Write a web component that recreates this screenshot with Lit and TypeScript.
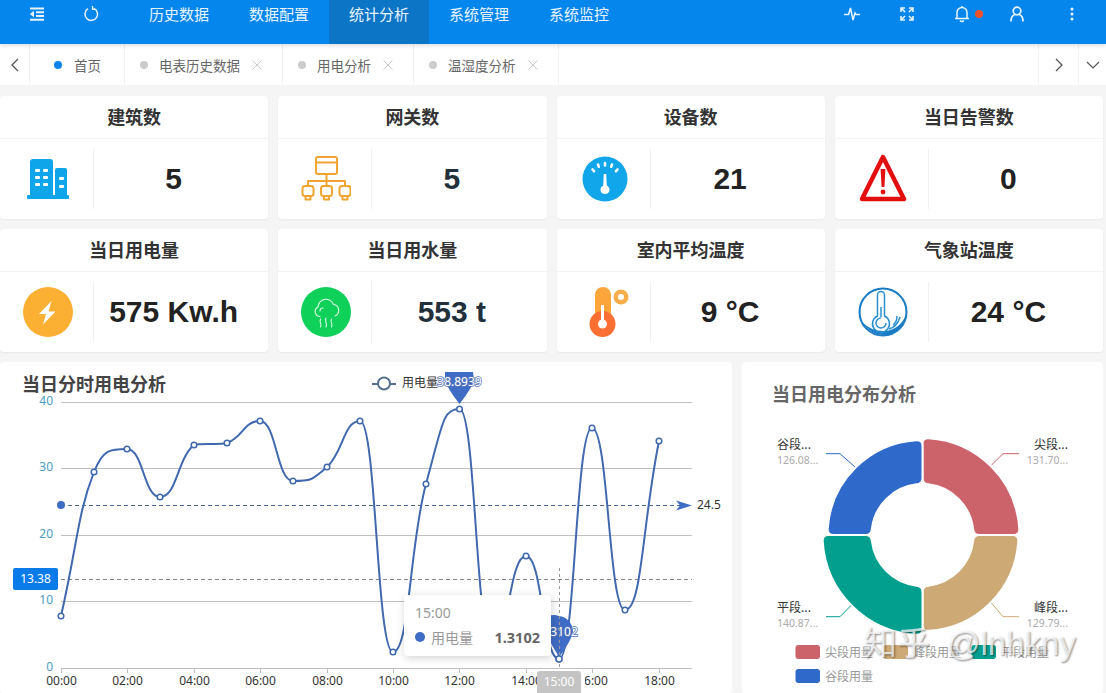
import { LitElement, html, css, svg } from "lit";
import { customElement } from "lit/decorators.js";

const PTS: [number, number][] = [
  [61, 616], [94, 472], [127, 449], [160, 497], [194, 445], [227, 443], [260, 421],
  [293, 481], [327, 467], [360, 421], [393, 652], [426, 484], [459.5, 409], [492, 644],
  [526, 556], [559, 659], [592, 428], [625, 610], [659, 441],
];

function linePath(p: [number, number][]): string {
  const slope = p.map((pt, i) => {
    if (i === 0) return (p[1][1] - pt[1]) / (p[1][0] - pt[0]);
    if (i === p.length - 1) return (pt[1] - p[i - 1][1]) / (pt[0] - p[i - 1][0]);
    const a = pt[1] - p[i - 1][1];
    const b = p[i + 1][1] - pt[1];
    if (a * b <= 0) return 0;
    return (p[i + 1][1] - p[i - 1][1]) / (p[i + 1][0] - p[i - 1][0]);
  });
  const ctrl = (x: number, y: number, m: number, h: number, limit: number): [number, number] => {
    const dy = m * h;
    if (Math.abs(dy) > Math.abs(limit - y) && m !== 0) {
      const nh = (limit - y) / m;
      return [x + nh, limit];
    }
    return [x + h, y + dy];
  };
  let d = `M${p[0][0]} ${p[0][1]}`;
  for (let i = 0; i < p.length - 1; i++) {
    const [x0, y0] = p[i];
    const [x1, y1] = p[i + 1];
    const h = (x1 - x0) * 0.5;
    const c1 = ctrl(x0, y0, slope[i], h, y1);
    const c2 = ctrl(x1, y1, slope[i + 1], -h, y0);
    d += `C${c1[0]} ${c1[1]} ${c2[0]} ${c2[1]} ${x1} ${y1}`;
  }
  return d;
}

function sector(cx: number, cy: number, r0: number, r1: number, a0: number, a1: number, rad: number): string {
  const P = (r: number, deg: number) => {
    const a = (deg * Math.PI) / 180;
    return `${(cx + r * Math.sin(a)).toFixed(2)} ${(cy - r * Math.cos(a)).toFixed(2)}`;
  };
  const d1 = ((rad / r1) * 180) / Math.PI;
  const d0 = ((rad / r0) * 180) / Math.PI;
  return [
    `M${P(r1, a0 + d1)}`,
    `A${r1} ${r1} 0 0 1 ${P(r1, a1 - d1)}`,
    `Q${P(r1, a1)} ${P(r1 - rad, a1)}`,
    `L${P(r0 + rad, a1)}`,
    `Q${P(r0, a1)} ${P(r0, a1 - d0)}`,
    `A${r0} ${r0} 0 0 0 ${P(r0, a0 + d0)}`,
    `Q${P(r0, a0)} ${P(r0 + rad, a0)}`,
    `L${P(r1 - rad, a0)}`,
    `Q${P(r1, a0)} ${P(r1, a0 + d1)}Z`,
  ].join("");
}

const ICONS = {
  building: svg`
    <rect x="4" y="41" width="42" height="4" rx="1" fill="#0ea5ea"/>
    <path d="M7 42V8a3 3 0 0 1 3-3h17a3 3 0 0 1 3 3v34z" fill="#0ea5ea"/>
    <path d="M32 42V16a2 2 0 0 1 2-2h8a2 2 0 0 1 2 2v26z" fill="#0ea5ea"/>
    <g fill="#fff">
      <rect x="12" y="15" width="5" height="3" rx="1"/><rect x="20" y="15" width="5" height="3" rx="1"/>
      <rect x="12" y="22" width="5" height="3" rx="1"/><rect x="20" y="22" width="5" height="3" rx="1"/>
      <rect x="12" y="29" width="5" height="3" rx="1"/><rect x="20" y="29" width="5" height="3" rx="1"/>
      <rect x="36" y="23" width="5" height="3" rx="1"/><rect x="36" y="31" width="5" height="3" rx="1"/>
    </g>`,
  network: svg`
    <g fill="none" stroke="#f0a530" stroke-width="2" stroke-linejoin="round">
      <rect x="15" y="3" width="21" height="17" rx="2"/><path d="M15 8.500h21"/>
      <path d="M25.500 20v7M7 32v-5h37v5M25.500 27v5"/>
      <rect x="1.500" y="32" width="11" height="10" rx="2.500"/>
      <rect x="20" y="32" width="11" height="10" rx="2.500"/>
      <rect x="38.500" y="32" width="11" height="10" rx="2.500"/>
      <path d="M4.500 42v3.500h5V42M23 42v3.500h5V42M41.500 42v3.500h5V42"/>
    </g>`,
  gauge: svg`
    <circle cx="25" cy="25" r="22.500" fill="#11a5ea"/>
    <g stroke="#fff" stroke-width="2.600" stroke-linecap="round">
      <path d="M12.500 15.500l1.500 1.700M18 10.500l.8 2.200M25 9v2.500M32 10.500l-.8 2.200M37.500 15.500l-1.500 1.700"/>
    </g>
    <path d="M23.800 20h2.400l.6 11.500a4.500 4.500 0 1 1-3.600 0z" fill="#fff"/>`,
  warn: svg`
    <path d="M25 3L46 45H4Z" fill="#fff" stroke="#e30f0f" stroke-width="4.500" stroke-linejoin="round"/>
    <path d="M22.600 15h4.800l-1 18h-2.800z" fill="#e30f0f"/>
    <circle cx="25" cy="38" r="2.400" fill="#e30f0f"/>`,
  bolt: svg`
    <circle cx="25" cy="25" r="25" fill="#fbb034"/>
    <path d="M28.500 14L16 27h7l-3 10.500L32.500 24.500H25.500z" fill="#fff"/>`,
  cloud: svg`
    <circle cx="25" cy="25" r="25" fill="#0fd058"/>
    <g fill="none" stroke="#fff" stroke-opacity=".85" stroke-width="1.100" stroke-linecap="round">
      <path d="M19 29.500a5 5 0 0 1-2-9.500a8 8 0 0 1 15.500-2.500a6 6 0 0 1 1.500 11.500"/>
      <path d="M19 24a3 3 0 0 1 3-3"/>
      <path d="M19.500 32q-1 2.500 0 4t0 4M25 31q-1 2.500 0 4.500t0 4.500M30.500 32q-1 2.500 0 4t0 4"/>
    </g>`,
  thermoOrange: svg`
    <path d="M15 8a8 8 0 0 1 16 0v24H15z" fill="#fca53a"/>
    <circle cx="22.500" cy="37" r="13" fill="#fb6f33"/>
    <rect x="21" y="18" width="3" height="17" fill="#fff"/>
    <circle cx="22.500" cy="37" r="4.500" fill="#fff"/>
    <circle cx="41" cy="10" r="7.500" fill="#f9ae4c"/>
    <circle cx="41" cy="10" r="3" fill="#fff"/>`,
  thermoBlue: svg`
    <circle cx="25" cy="25" r="23.500" fill="#fff" stroke="#1a7cc4" stroke-width="2"/>
    <path d="M4 35Q14 50 30 48Q44 45 48 28Q42 42 28 44Q14 45 4 35Z" fill="#1a7cc4"/>
    <g fill="none" stroke="#2b90d0" stroke-width="1.500">
      <path d="M19.500 29V8a3.500 3.500 0 0 1 7 0v21a8.500 8.500 0 1 1-7 0z"/>
      <path d="M23 20v10M28 36a5 5 0 1 1-5-5"/>
      <path d="M35 38q4-3 4-9M31 42q8-2 11-12"/>
    </g>`,
};

const CARDS = [
  { title: "建筑数", value: "5", icon: ICONS.building, alt: false },
  { title: "网关数", value: "5", icon: ICONS.network, alt: true },
  { title: "设备数", value: "21", icon: ICONS.gauge, alt: false },
  { title: "当日告警数", value: "0", icon: ICONS.warn, alt: false },
  { title: "当日用电量", value: "575 Kw.h", icon: ICONS.bolt, alt: false },
  { title: "当日用水量", value: "553 t", icon: ICONS.cloud, alt: true },
  { title: "室内平均温度", value: "9 °C", icon: ICONS.thermoOrange, alt: false },
  { title: "气象站温度", value: "24 °C", icon: ICONS.thermoBlue, alt: false },
];

const TABS = [
  { label: "首页", on: true, close: false },
  { label: "电表历史数据", on: false, close: true },
  { label: "用电分析", on: false, close: true },
  { label: "温湿度分析", on: false, close: true },
];

const NAV = ["历史数据", "数据配置", "统计分析", "系统管理", "系统监控"];

const GRID_Y: [number, string][] = [[402, "40"], [468, "30"], [535, "20"], [601, "10"], [668, "0"]];
const X_LABELS = ["00:00", "02:00", "04:00", "06:00", "08:00", "10:00", "12:00", "14:00", "16:00", "18:00"];

@customElement("app-root")
export class AppRoot extends LitElement {
  static styles = css`
    :host {
      display: block;
      position: relative;
      width: 100%;
      height: 693px;
      overflow: hidden;
      background: #f5f5f5;
      font-family: "Noto Sans CJK SC", "Noto Sans", sans-serif;
    }
    .top {
      display: flex;
      align-items: flex-start;
      height: 44px;
      background: #0486ec;
      box-shadow: 0 2px 4px rgba(0, 0, 0, 0.12);
      position: relative;
      z-index: 2;
    }
    .tools {
      display: flex;
      align-items: center;
      gap: 36px;
      height: 28px;
      padding-left: 28px;
      margin-right: 29px;
    }
    .tools svg, .right svg { display: block; }
    .nav { display: flex; }
    .nav div {
      width: 100px;
      height: 44px;
      line-height: 28px;
      text-align: center;
      font-size: 15px;
      color: #e8f4fd;
    }
    .nav div.on { background: #0c75c6; }
    .right {
      display: flex;
      margin-left: auto;
      padding-right: 7px;
    }
    .right div {
      position: relative;
      width: 55px;
      height: 28px;
      display: flex;
      align-items: center;
      justify-content: center;
    }
    .badge {
      position: absolute;
      left: 41px;
      top: 10px;
      width: 8px;
      height: 8px;
      border-radius: 50%;
      background: #f0512a;
    }
    .tabs {
      display: flex;
      height: 41px;
      background: #fff;
      color: #666;
      font-size: 13.5px;
    }
    .cell {
      display: flex;
      align-items: center;
      justify-content: center;
      border-right: 1px solid #f2f2f2;
      box-sizing: border-box;
    }
    .cell.back { width: 30px; }
    .tab {
      display: flex;
      align-items: center;
      padding: 0 20px 0 15px;
      border-right: 1px solid #f2f2f2;
    }
    .tab.home { padding: 0 23px 0 24px; }
    .dot {
      width: 8px;
      height: 8px;
      border-radius: 50%;
      background: #ccc;
      margin-right: 11px;
    }
    .dot.on { background: #0b85e8; margin-right: 12px; }
    .tab svg { margin-left: 12px; display: block; }
    .spacer { flex: 1; border-right: 1px solid #f2f2f2; }
    .cell.next { width: 40px; }
    .cell.down { width: 27px; border-right: 0; }
    .main {
      display: flex;
      flex-direction: column;
      gap: 10px;
      padding: 11px 3px 0 0;
    }
    .cards {
      display: grid;
      grid-template-columns: repeat(4, 1fr);
      grid-auto-rows: 123px;
      gap: 10px;
    }
    .card {
      background: #fff;
      border-radius: 4px;
      box-shadow: 0 1px 2px rgba(0, 0, 0, 0.05);
      display: flex;
      flex-direction: column;
    }
    .card h3 {
      margin: 0;
      height: 42px;
      line-height: 40px;
      text-align: center;
      font-size: 18px;
      font-weight: 700;
      color: #333;
      border-bottom: 1px solid #f3f3f3;
    }
    .body {
      flex: 1;
      display: flex;
      align-items: center;
    }
    .ico {
      width: 94px;
      height: 60px;
      flex: none;
      display: flex;
      align-items: center;
      justify-content: center;
      border-right: 1px solid #f0f0f0;
      box-sizing: border-box;
      padding-left: 3px;
    }
    .val {
      flex: 1;
      padding-right: 15px;
      text-align: center;
      font-family: "Liberation Sans", Arial, sans-serif;
      font-weight: 700;
      font-size: 30px;
      color: #222;
    }
    .val.alt { color: #22303c; }
    .panels {
      display: flex;
      gap: 10px;
      height: 331px;
    }
    .panel {
      position: relative;
      background: #fff;
      border-radius: 4px;
      overflow: hidden;
    }
    .panel.line { width: 732px; flex: none; }
    .panel.pie { flex: 1; }
    .panel svg { display: block; }
    .t { font-family: "Noto Sans CJK SC", sans-serif; font-weight: 700; font-size: 18px; }
    .num { font-family: "Noto Sans", sans-serif; font-size: 12px; }
    .small { font-family: "Noto Sans", sans-serif; font-size: 10.5px; }
    .cjk { font-family: "Noto Sans CJK SC", sans-serif; font-size: 12px; }
    .pinlabel {
      font-family: "Noto Sans", sans-serif;
      font-size: 12px;
      fill: #fff;
      stroke: #5a78b8;
      stroke-width: 1.6px;
      paint-order: stroke;
    }
    .tooltip {
      position: absolute;
      left: 404px;
      top: 233px;
      width: 147px;
      height: 61px;
      box-sizing: border-box;
      padding: 8px 11px;
      background: #fff;
      border-radius: 4px;
      box-shadow: 1px 2px 8px rgba(0, 0, 0, 0.18);
      font-size: 14px;
      color: #999;
    }
    .tooltip .h {
      font-family: "Noto Sans", sans-serif;
      line-height: 20px;
      margin-bottom: 4px;
    }
    .tooltip .r {
      display: flex;
      align-items: center;
      line-height: 20px;
    }
    .tooltip i {
      width: 10px;
      height: 10px;
      border-radius: 50%;
      background: #3f6cc4;
      margin-right: 6px;
    }
    .tooltip b {
      margin-left: auto;
      color: #666;
      font-family: "Noto Sans", sans-serif;
      font-weight: 700;
      font-size: 14.5px;
    }
    .mark {
      position: absolute;
      left: 864px;
      top: 619px;
      display: flex;
      align-items: baseline;
      gap: 17px;
      font-size: 33px;
      line-height: 44px;
      color: rgba(255, 255, 255, 0.72);
      text-shadow: 1px 1px 2px rgba(0, 0, 0, 0.45);
      z-index: 3;
      pointer-events: none;
    }
    .mark span:last-child { font-family: "Liberation Sans", sans-serif; }
  `;

  private chart() {
    const ticks = Array.from({ length: 10 }, (_, i) => Math.round(61 + i * 66.4) + 0.5);
    return html`<svg width="732" height="331" viewBox="0 362 732 331">
      <text x="22" y="391" class="t" fill="#444">当日分时用电分析</text>

      ${GRID_Y.map(
        ([y, l]) => svg`
          <line x1="61" x2="692" y1=${y + 0.5} y2=${y + 0.5} stroke="#c0c0c0" />
          <text x="53" y=${y + 3} text-anchor="end" class="num" fill="#4b9dc0">${l}</text>`
      )}
      ${ticks.map((x, i) => svg`
        <line x1=${x} x2=${x} y1="668" y2="673" stroke="#c0c0c0" />
        <text x=${x} y="685" text-anchor="middle" class="num" fill="#333">${X_LABELS[i]}</text>`)}

      <line x1="61" x2="680" y1="505.500" y2="505.500" stroke="#4a6a9a" stroke-dasharray="4 3" />
      <line x1="61" x2="692" y1="579.500" y2="579.500" stroke="#888" stroke-dasharray="4 3" />
      <circle cx="61" cy="505" r="4" fill="#3f6cc4" />
      <path d="M676 500.500L692 505.500L676 510.500L680 505.500Z" fill="#3f6cc4" />
      <text x="697" y="509" class="num" fill="#333">24.5</text>

      <rect x="13" y="568" width="45" height="22" rx="2" fill="#0a7be8" />
      <text x="35.500" y="583" text-anchor="middle" class="num" fill="#fff">13.38</text>

      <path d=${linePath(PTS)} fill="none" stroke="#4169ad" stroke-width="2" />
      ${PTS.map(([x, y]) => svg`<circle cx=${x} cy=${y} r="2.800" fill="#fff" stroke="#4169ad" stroke-width="1.500" />`)}

      <path d="M445 372H473L474 380Q472 388 459.500 404Q447 388 445 380Z" fill="#3f6cc4" />
      <text x="459.500" y="386" text-anchor="middle" class="pinlabel">38.8939</text>

      <line x1="372" x2="396" y1="384" y2="384" stroke="#55708f" stroke-width="2" />
      <circle cx="384" cy="383.500" r="6" fill="#fff" stroke="#55708f" stroke-width="2" />
      <text x="402" y="387" class="cjk" fill="#333">用电量</text>

      <path d="M559 657L549 640A13 13 0 0 1 559 616A16 16 0 0 1 573 631Q572 640 559 657Z" fill="#3f6cc4" />
      <text x="559" y="636" text-anchor="middle" class="pinlabel">1.3102</text>
      <line x1="559.500" x2="559.500" y1="568" y2="668" stroke="#999" stroke-dasharray="3 3" />
      <circle cx="559" cy="659" r="3" fill="#fff" stroke="#4169ad" stroke-width="1.500" />

      <rect x="581" y="674" width="4" height="16" fill="#fff" />
      <rect x="537" y="671" width="44" height="24" rx="3" fill="#c4c4c4" />
      <text x="559" y="686" text-anchor="middle" class="num" fill="#fff">15:00</text>
    </svg>`;
  }

  private donut() {
    const cx = 922.5;
    const cy = 535;
    const slices = [
      { c: "#cc636b", r: 97, a0: 0, a1: 90 },
      { c: "#cda976", r: 96, a0: 90, a1: 180 },
      { c: "#029f8f", r: 100, a0: 180, a1: 270 },
      { c: "#2f69c9", r: 95, a0: 270, a1: 360 },
    ];
    const labels = [
      { x: 1068, y: 449, a: "end", n: "尖段...", v: "131.70..." },
      { x: 777, y: 449, a: "start", n: "谷段...", v: "126.08..." },
      { x: 777, y: 612, a: "start", n: "平段...", v: "140.87..." },
      { x: 1068, y: 612, a: "end", n: "峰段...", v: "129.79..." },
    ];
    const leaders = [
      { d: "M991.500 465L1003 453.700H1019", c: "#cc636b" },
      { d: "M855 467L840 453.700H826", c: "#2f69c9" },
      { d: "M851 605.500L840 616.700H826", c: "#029f8f" },
      { d: "M991.500 603L1003 616.700H1019", c: "#cda976" },
    ];
    const legend = [
      { x: 795.5, y: 645, c: "#cc636b", t: "尖段用量" },
      { x: 883.5, y: 645, c: "#cda976", t: "峰段用量" },
      { x: 971.5, y: 645, c: "#029f8f", t: "平段用量" },
      { x: 795.5, y: 669, c: "#2f69c9", t: "谷段用量" },
    ];
    return html`<svg width="361" height="331" viewBox="742 362 361 331">
      <text x="772" y="401" class="t" fill="#666">当日用电分布分析</text>
      ${slices.map(
        (s) => svg`<path d=${sector(cx, cy, 51, s.r, s.a0, s.a1, 6)} fill=${s.c} stroke="#fff" stroke-width="2" />`
      )}
      ${leaders.map((l) => svg`<path d=${l.d} fill="none" stroke=${l.c} />`)}
      ${labels.map(
        (l) => svg`
          <text x=${l.x} y=${l.y} text-anchor=${l.a} class="cjk" fill="#333">${l.n}</text>
          <text x=${l.x} y=${l.y + 15} text-anchor=${l.a} class="small" fill="#aaa">${l.v}</text>`
      )}
      ${legend.map(
        (l) => svg`
          <rect x=${l.x} y=${l.y} width="24.500" height="14" rx="3" fill=${l.c} />
          <text x=${l.x + 29.5} y=${l.y + 11.5} class="cjk" fill="#999">${l.t}</text>`
      )}
    </svg>`;
  }

  render() {
    const stroke = "#e8f4fd";
    return html`
      <header class="top">
        <div class="tools">
          <svg width="18" height="14" viewBox="0 0 18 14" fill="none" stroke=${stroke} stroke-width="2">
            <path d="M2 1.500H16M8 5.300H16M8 9H16M2 12.700H16" />
            <path d="M5.500 4.500L2.500 7L5.500 9.500Z" fill=${stroke} stroke-width="1" />
          </svg>
          <svg width="18" height="18" viewBox="0 0 18 18" fill="none" stroke=${stroke} stroke-width="1.500">
            <path d="M11.500 3.200A6.300 6.300 0 1 1 6 3.700" />
            <path d="M10.500 1V4.500H14" stroke-width="1.200" />
          </svg>
        </div>
        <nav class="nav">
          ${NAV.map((n, i) => html`<div class=${i === 2 ? "on" : ""}>${n}</div>`)}
        </nav>
        <div class="right">
          <div>
            <svg width="18" height="16" viewBox="0 0 18 16" fill="none" stroke=${stroke} stroke-width="1.500">
              <path d="M1 8.500H5.500L7.500 2L10 14L12 7L13 8.500H17" />
            </svg>
          </div>
          <div>
            <svg width="14" height="14" viewBox="0 0 14 14" fill="none" stroke=${stroke} stroke-width="1.600">
              <path d="M1 5V1H5M9 1H13V5M13 9V13H9M5 13H1V9M1.500 1.500L5 5M12.500 1.500L9 5M12.500 12.500L9 9M1.500 12.500L5 9" />
            </svg>
          </div>
          <div>
            <svg width="16" height="18" viewBox="0 0 16 18" fill="none" stroke=${stroke} stroke-width="1.500">
              <path d="M3 13.500V7.500A5 5 0 0 1 13 7.500V13.500M1 13.500H15M6 15.500Q8 17.500 10 15.500M8 1V2.500" />
            </svg>
            <span class="badge"></span>
          </div>
          <div>
            <svg width="14" height="16" viewBox="0 0 14 16" fill="none" stroke=${stroke} stroke-width="1.700">
              <circle cx="7" cy="5" r="3.800" />
              <path d="M1 15.500C1 11.500 3 9 5 8.500M13 15.500C13 11.500 11 9 9 8.500" />
            </svg>
          </div>
          <div>
            <svg width="4" height="14" viewBox="0 0 4 14" fill=${stroke}>
              <circle cx="2" cy="2" r="1.500" /><circle cx="2" cy="7" r="1.500" /><circle cx="2" cy="12" r="1.500" />
            </svg>
          </div>
        </div>
      </header>

      <div class="tabs">
        <div class="cell back">
          <svg width="8" height="14" viewBox="0 0 8 14" fill="none" stroke="#555" stroke-width="1.300">
            <path d="M7 1L1 7L7 13" />
          </svg>
        </div>
        ${TABS.map(
          (t) => html`<div class="tab ${t.close ? "" : "home"}">
            <span class="dot ${t.on ? "on" : ""}"></span>
            <span>${t.label}</span>
            ${t.close
              ? html`<svg width="10" height="10" viewBox="0 0 10 10" stroke="#c8c8c8" stroke-width="1">
                  <path d="M0.500 0.500L9.500 9.500M9.500 0.500L0.500 9.500" />
                </svg>`
              : ""}
          </div>`
        )}
        <div class="spacer"></div>
        <div class="cell next">
          <svg width="8" height="14" viewBox="0 0 8 14" fill="none" stroke="#555" stroke-width="1.300">
            <path d="M1 1L7 7L1 13" />
          </svg>
        </div>
        <div class="cell down">
          <svg width="14" height="8" viewBox="0 0 14 8" fill="none" stroke="#555" stroke-width="1.200">
            <path d="M1 1L7 7L13 1" />
          </svg>
        </div>
      </div>

      <main class="main">
        <section class="cards">
          ${CARDS.map(
            (c) => html`<article class="card">
              <h3>${c.title}</h3>
              <div class="body">
                <div class="ico">
                  <svg width="50" height="50" viewBox="0 0 50 50">${c.icon}</svg>
                </div>
                <div class="val ${c.alt ? "alt" : ""}">${c.value}</div>
              </div>
            </article>`
          )}
        </section>
        <section class="panels">
          <div class="panel line">
            ${this.chart()}
            <div class="tooltip">
              <div class="h">15:00</div>
              <div class="r"><i></i><span>用电量</span><b>1.3102</b></div>
            </div>
          </div>
          <div class="panel pie">${this.donut()}</div>
        </section>
      </main>

      <div class="mark"><span>知乎</span><span>@lnhkny</span></div>
    `;
  }
}
